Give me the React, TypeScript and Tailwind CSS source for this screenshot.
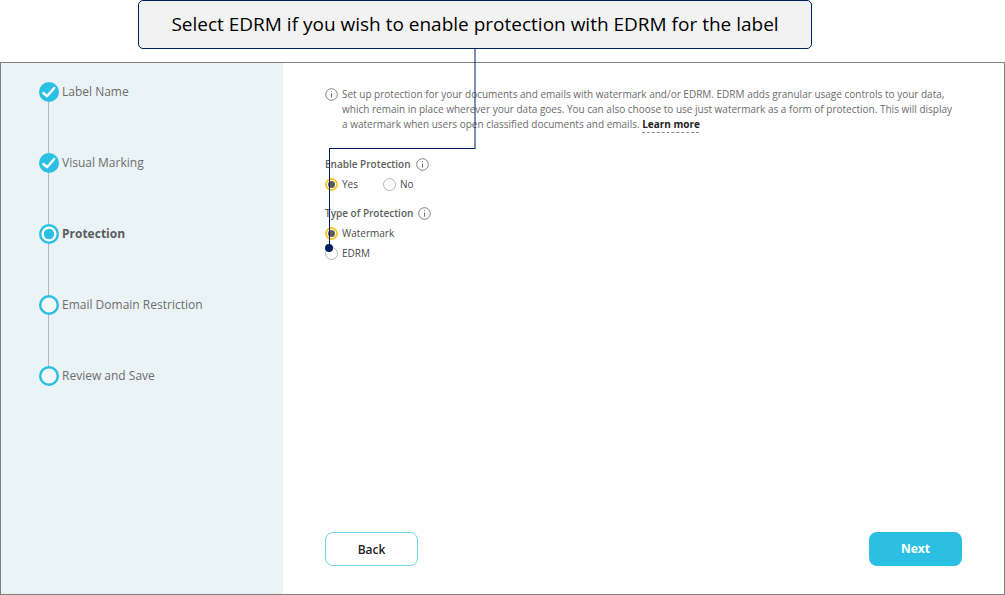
type StepState = "done" | "current" | "upcoming";

const steps: { label: string; state: StepState }[] = [
  { label: "Label Name", state: "done" },
  { label: "Visual Marking", state: "done" },
  { label: "Protection", state: "current" },
  { label: "Email Domain Restriction", state: "upcoming" },
  { label: "Review and Save", state: "upcoming" },
];

const InfoIcon = () => (
  <svg
    viewBox="0 0 13 13"
    className="size-[13px] shrink-0"
    fill="none"
    stroke="#757575"
    aria-hidden="true"
  >
    <circle cx="6.5" cy="6.5" r="5.8" strokeWidth="0.9" />
    <path d="M6.5 5.4v4.2" strokeWidth="1" />
    <circle cx="6.5" cy="3.6" r="0.6" fill="#757575" stroke="none" />
  </svg>
);

const StepIcon = ({ state }: { state: StepState }) => (
  <svg viewBox="0 0 20 20" className="size-5" fill="none" aria-hidden="true">
    {state === "done" ? (
      <>
        <circle cx="10" cy="10" r="10" fill="#2bbfe3" />
        <path
          d="M4.3 11 8 14.2 15.2 6"
          stroke="#fff"
          strokeWidth="2.4"
          strokeLinecap="round"
          strokeLinejoin="round"
        />
      </>
    ) : (
      <>
        <circle
          cx="10"
          cy="10"
          r="8.8"
          fill={state === "current" ? "#fff" : "#f3f8f9"}
          stroke="#2bbfe3"
          strokeWidth="2.4"
        />
        {state === "current" && <circle cx="10" cy="10" r="5.2" fill="#2bbfe3" />}
      </>
    )}
  </svg>
);

const Radio = ({
  name,
  label,
  checked,
}: {
  name: string;
  label: string;
  checked?: boolean;
}) => (
  <label className="flex items-center gap-1 text-[10px] leading-4 text-[#4a4a4a]">
    <input
      type="radio"
      name={name}
      defaultChecked={checked}
      className="size-[13px] appearance-none rounded-full border border-[#b5b5b5] bg-clip-content p-0.5 checked:border-2 checked:border-[#fcc52f] checked:bg-[#5a5a5c] checked:p-px"
    />
    {label}
  </label>
);

const Callout = () => (
  <div className="relative mr-[193px] ml-[138px] rounded-[5px] border border-[#002060] bg-[#f2f2f2] px-2 py-[9px] text-center text-[19px] leading-[29px] text-black">
    Select EDRM if you wish to enable protection with EDRM for the label
    {/* Pointer line down to the EDRM option */}
    <div className="absolute top-full right-[335px] z-10 h-[101px] w-[147px] border-r-2 border-b border-r-[#002060]/50 border-b-[#002060]">
      <div className="absolute top-full left-0 h-[100px] w-px bg-[#002060]">
        <span className="absolute bottom-[-4px] left-[-4px] size-2 rounded-full bg-[#002060]" />
      </div>
    </div>
  </div>
);

const App = () => {
  return (
    <div className="flex min-h-screen flex-col bg-white font-['Open_Sans','Noto_Sans',sans-serif]">
      <Callout />

      <div className="mt-[13px] flex flex-1 border border-[#7f7f7f]">
        {/* Steps */}
        <nav className="w-[282px] shrink-0 bg-[#eaf3f5] pt-[19px] pl-[38px]">
          <ol>
            {steps.map((step, i) => (
              <li key={step.label} className="flex gap-[3px]">
                <div>
                  <StepIcon state={step.state} />
                  {i < steps.length - 1 && (
                    <div className="ml-[9px] h-[51px] w-px bg-[#b3b8ba]" />
                  )}
                </div>
                <span
                  className={
                    step.state === "current"
                      ? "text-[12px] leading-5 font-bold text-[#5c5c5c]"
                      : "text-[12px] leading-5 text-[#6e6e6e]"
                  }
                >
                  {step.label}
                </span>
              </li>
            ))}
          </ol>
        </nav>

        {/* Form */}
        <main className="flex flex-1 flex-col justify-between px-[42px] pt-6 pb-7">
          <form id="protection">
            <div className="flex gap-1">
              <div className="pt-px">
                <InfoIcon />
              </div>
              <p className="pr-1 text-[10px] leading-[15px] text-[#6b6b6b]">
                Set up protection for your documents and emails with watermark
                and/or EDRM. EDRM adds granular usage controls to your data,
                which remain in place wherever your data goes. You can also
                choose to use just watermark as a form of protection. This will
                display a watermark when users open classified documents and
                emails.{" "}
                <a
                  href="#learn-more"
                  className="font-bold text-[#222] underline decoration-[#8a8a8a] decoration-dashed decoration-1 underline-offset-4"
                >
                  Learn more
                </a>
              </p>
            </div>

            <fieldset className="mt-6">
              <legend className="flex items-center gap-[5px] text-[10px] leading-4 font-semibold text-[#606060]">
                Enable Protection
                <InfoIcon />
              </legend>
              <div className="mt-1 flex gap-[25px]">
                <Radio name="enable" label="Yes" checked />
                <Radio name="enable" label="No" />
              </div>
            </fieldset>

            <fieldset className="mt-[13px]">
              <legend className="flex items-center gap-[5px] text-[10px] leading-4 font-semibold text-[#606060]">
                Type of Protection
                <InfoIcon />
              </legend>
              <div className="mt-1 flex flex-col items-start gap-1">
                <Radio name="type" label="Watermark" checked />
                <Radio name="type" label="EDRM" />
              </div>
            </fieldset>
          </form>

          <div className="flex justify-between">
            <button
              type="button"
              className="h-[34px] w-[93px] rounded-lg border border-[#6fd6ee] bg-white pt-[2px] text-[12px] font-semibold text-[#222]"
            >
              Back
            </button>
            <button
              type="submit"
              form="protection"
              className="h-[34px] w-[93px] rounded-lg bg-[#2bbfe3] text-[12px] font-bold text-white"
            >
              Next
            </button>
          </div>
        </main>
      </div>
    </div>
  );
};

export default App;
